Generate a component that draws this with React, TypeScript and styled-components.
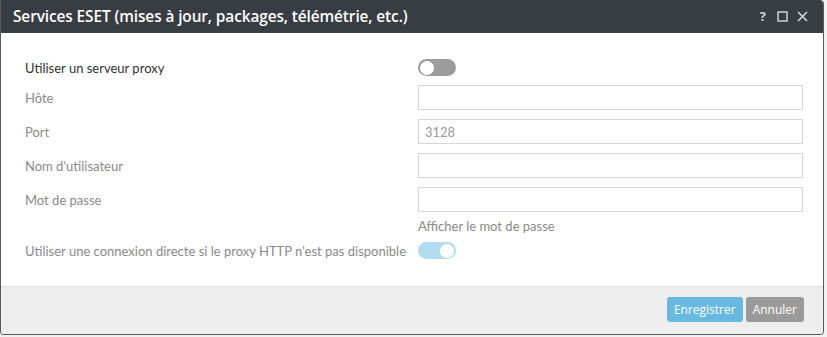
import React from "react";
import styled, { createGlobalStyle } from "styled-components";

const Global = createGlobalStyle`
  html, body { margin: 0; padding: 0; background: #f2f2f2; }
  body { font-family: Lato, "Open Sans", sans-serif; }
  * { box-sizing: border-box; }
`;

const Dialog = styled.div`
  width: 824px;
  height: 335px;
  background: #ffffff;
  border: 1px solid #555a60;
  border-top: none;
  border-radius: 0 4px 4px 4px;
  display: flex;
  flex-direction: column;
  overflow: hidden;
`;

const Header = styled.div`
  height: 33px;
  background: #383c43;
  display: flex;
  align-items: center;
  padding: 0 15px 0 12px;
  flex-shrink: 0;
`;

const Title = styled.div`
  flex: 1;
  color: #ffffff;
  font-family: "Open Sans", sans-serif;
  font-weight: 600;
  font-size: 15.4px;
  letter-spacing: -0.1px;
`;

const Tools = styled.div`
  display: flex;
  align-items: center;
  gap: 9px;
  color: #d0d2d4;
`;

const Help = styled.span`
  font-family: "Open Sans", sans-serif;
  font-weight: 700;
  font-size: 13px;
  line-height: 1;
  margin-right: 2px;
`;

const Body = styled.div`
  flex: 1;
  padding: 26px 20px 0 24px;
  display: flex;
  flex-direction: column;
`;

const Row = styled.div<{ $h?: number; $mb?: number }>`
  display: grid;
  grid-template-columns: 393px 385px;
  align-items: center;
  height: ${(p) => p.$h ?? 25}px;
  margin-bottom: ${(p) => p.$mb ?? 9}px;
`;

const Label = styled.div<{ $dark?: boolean }>`
  font-size: 13px;
  color: ${(p) => (p.$dark ? "#333333" : "#8a8a8a")};
  white-space: nowrap;
`;

const Input = styled.div`
  height: 25px;
  border: 1px solid #d6d6d6;
  background: #fff;
  font-size: 13px;
  color: #9a9a9a;
  display: flex;
  align-items: center;
  padding-left: 6px;
`;

const Hint = styled.div`
  grid-column: 2;
  font-size: 13px;
  color: #8a8a8a;
`;

const Toggle = styled.div<{ $on?: boolean }>`
  width: 38px;
  height: 17px;
  border-radius: 9px;
  background: ${(p) => (p.$on ? "#b3dcf1" : "#9c9c9c")};
  position: relative;
`;

const Knob = styled.div<{ $on?: boolean }>`
  position: absolute;
  top: 1.5px;
  ${(p) => (p.$on ? "right: 2px;" : "left: 1.5px;")}
  width: 14px;
  height: 14px;
  border-radius: 50%;
  background: #fff;
`;

const Footer = styled.div`
  height: 48px;
  background: #eeeeee;
  border-top: 1px solid #e0e0e0;
  display: flex;
  justify-content: flex-end;
  align-items: center;
  gap: 3px;
  padding: 0 19px 2px 0;
  flex-shrink: 0;
`;

const Button = styled.button<{ $primary?: boolean }>`
  height: 25px;
  border: none;
  border-radius: 3px;
  padding: 0 7px;
  font-family: "Open Sans", sans-serif;
  font-size: 12px;
  color: #ffffff;
  background: ${(p) => (p.$primary ? "#68b9e0" : "#9a9a9a")};
`;

const Switch = ({ on }: { on?: boolean }) => (
  <Toggle $on={on}>
    <Knob $on={on} />
  </Toggle>
);

export default function App() {
  return (
    <>
      <Global />
      <Dialog>
        <Header>
          <Title>Services ESET (mises à jour, packages, télémétrie, etc.)</Title>
          <Tools>
            <Help>?</Help>
            <svg width="11" height="11" viewBox="0 0 11 11">
              <rect x="1" y="1" width="9" height="9" fill="none" stroke="#d0d2d4" strokeWidth="1.5" />
            </svg>
            <svg width="11" height="11" viewBox="0 0 11 11">
              <path d="M1 1 L10 10 M10 1 L1 10" stroke="#d0d2d4" strokeWidth="1.7" />
            </svg>
          </Tools>
        </Header>
        <Body>
          <Row $h={17} $mb={9}>
            <Label $dark>Utiliser un serveur proxy</Label>
            <Switch />
          </Row>
          <Row>
            <Label>Hôte</Label>
            <Input />
          </Row>
          <Row>
            <Label>Port</Label>
            <Input>3128</Input>
          </Row>
          <Row>
            <Label>Nom d'utilisateur</Label>
            <Input />
          </Row>
          <Row $mb={2}>
            <Label>Mot de passe</Label>
            <Input />
          </Row>
          <Row $h={24} $mb={4}>
            <Hint>Afficher le mot de passe</Hint>
          </Row>
          <Row $h={17} $mb={0}>
            <Label>Utiliser une connexion directe si le proxy HTTP n'est pas disponible</Label>
            <Switch on />
          </Row>
        </Body>
        <Footer>
          <Button $primary>Enregistrer</Button>
          <Button>Annuler</Button>
        </Footer>
      </Dialog>
    </>
  );
}
